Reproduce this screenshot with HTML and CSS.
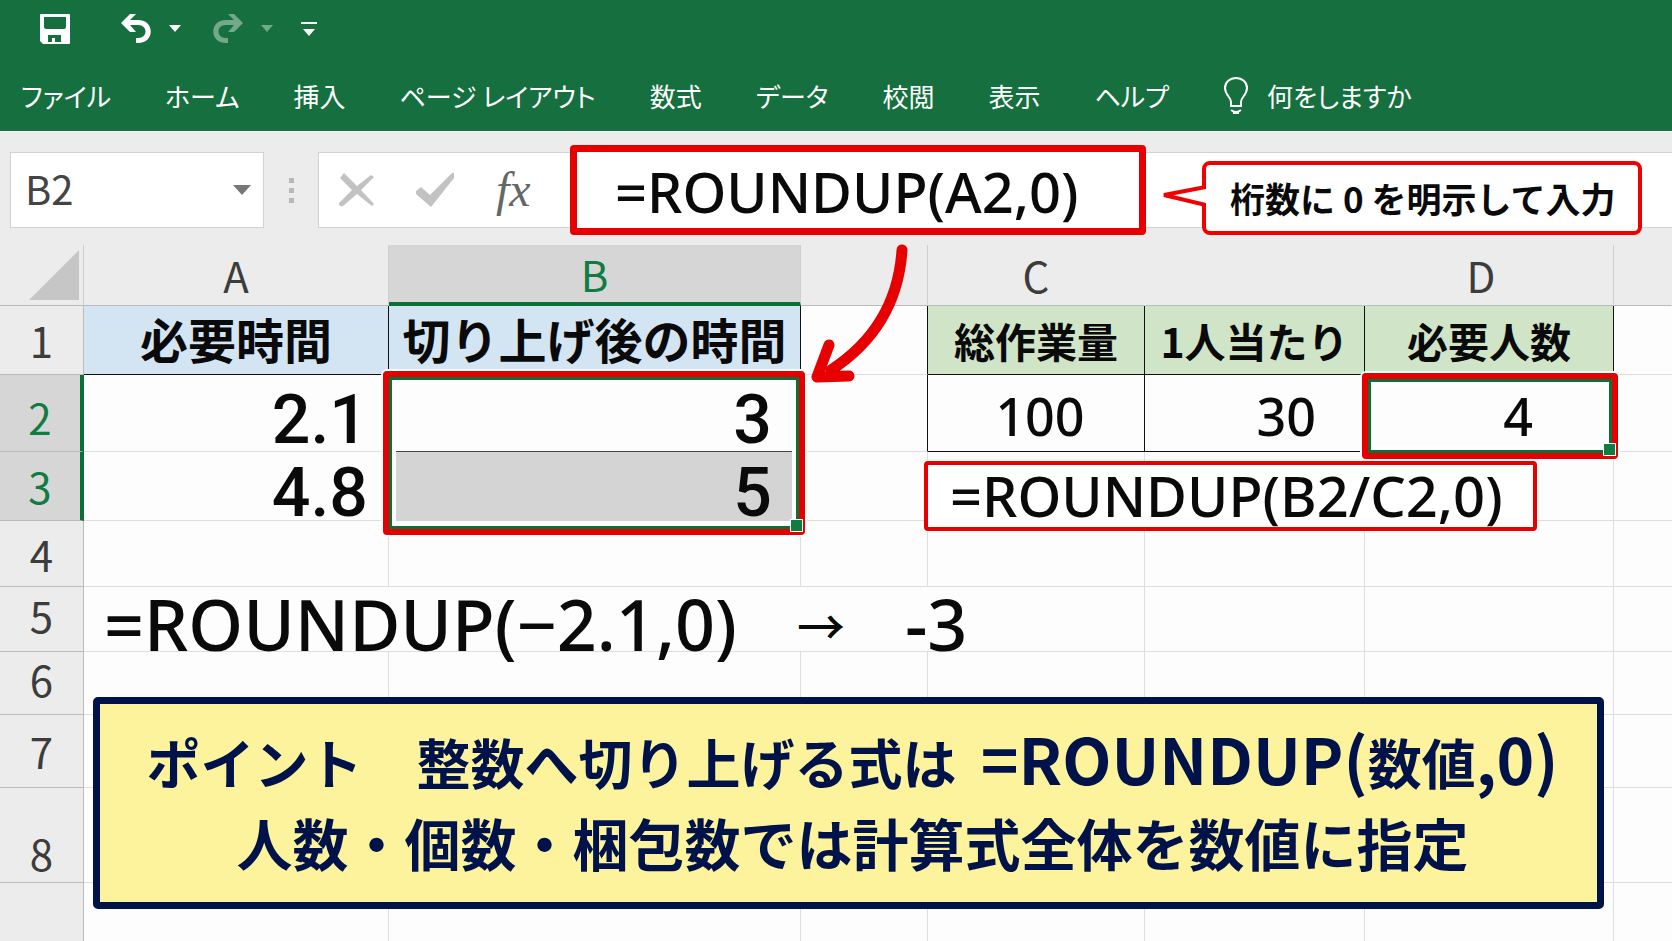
FILE: index.html
```html
<!DOCTYPE html>
<html lang="ja">

<head>
    <meta charset="utf-8">
    <title>ROUNDUP関数</title>
    <meta name="viewport" content="width=device-width, initial-scale=1">
    <link rel="stylesheet" href="styles.css">
</head>

<body>
    <header class="ribbon">
        <div class="quick-access">
            <button class="icon-button save" aria-label="上書き保存">
                <svg width="30" height="30" viewBox="0 0 30 30"><path fill="#fff" fill-rule="evenodd" d="M1 0H29Q30 0 30 1V29Q30 30 29 30H3L0 27V1Q0 0 1 0ZM4 3V13Q4 15 6 15H24Q26 15 26 13V3ZM8 21V28H12V24H15V28H21V21Z"/></svg>
            </button>
            <button class="icon-button undo" aria-label="元に戻す">
                <svg width="32" height="30" viewBox="0 0 32 30"><path fill="#fff" d="M1 9L10 0H16L10 6H18C35 6 35 29 18 29H16V24H18C28 24 28 11 18 11H10L16 18H10Z"/></svg>
            </button>
            <button class="icon-button undo-menu" aria-label="元に戻す一覧">
                <svg width="12" height="8" viewBox="0 0 12 8"><path fill="#fff" d="M0 0H12L6 7Z"/></svg>
            </button>
            <button class="icon-button redo" aria-label="やり直し">
                <svg width="32" height="30" viewBox="0 0 32 30"><path fill="#fff" d="M31 9L22 0H16L22 6H14C-3 6 -3 29 14 29H16V24H14C4 24 4 11 14 11H22L16 18H22Z"/></svg>
            </button>
            <button class="icon-button redo-menu" aria-label="やり直し一覧">
                <svg width="12" height="8" viewBox="0 0 12 8"><path fill="#fff" d="M0 0H12L6 7Z"/></svg>
            </button>
            <button class="icon-button" aria-label="クイックアクセスのカスタマイズ">
                <svg width="16" height="16" viewBox="0 0 16 16"><path fill="#fff" d="M0 1H16V3H0ZM2 8H14L8 15Z"/></svg>
            </button>
        </div>
        <nav class="tabs">
            <a href="#">ファイル</a>
            <a href="#">ホーム</a>
            <a href="#">挿入</a>
            <a href="#">ページ レイアウト</a>
            <a href="#">数式</a>
            <a href="#">データ</a>
            <a href="#">校閲</a>
            <a href="#">表示</a>
            <a href="#">ヘルプ</a>
            <a href="#" class="tell-me">
                <svg width="26" height="40" viewBox="0 0 26 40"><path fill="none" stroke="#fff" stroke-width="2" d="M8 30V26C8 21 2 19 2 12C2 6 7 2 13 2S24 6 24 12C24 19 18 21 18 26V30ZM8 34Q13 38 18 34M10 37H16"/></svg>
                何をしますか
            </a>
        </nav>
    </header>

    <div class="formula-bar">
        <div class="name-box">
            <input type="text" value="B2" aria-label="名前ボックス">
            <svg width="18" height="10" viewBox="0 0 18 10"><path fill="#777" d="M0 0H18L9 10Z"/></svg>
        </div>
        <div class="grip"><i></i><i></i><i></i></div>
        <div class="formula-field">
            <button class="icon-button cancel" aria-label="キャンセル">
                <svg width="36" height="34" viewBox="0 0 36 34"><path fill="#c2c2c2" d="M5 0L18 13L32 2L35 4L22 17L35 31L33 33L18 21L4 33Q0 34 0 30L13 17L1 5Z"/></svg>
            </button>
            <button class="icon-button enter" aria-label="入力">
                <svg width="38" height="34" viewBox="0 0 38 34"><path fill="#c2c2c2" d="M0 18L5 14L14 22L36 0H38V5L15 34L0 21Z"/></svg>
            </button>
            <button class="fx" aria-label="関数の挿入">fx</button>
            <input class="formula-input" type="text" value="=ROUNDUP(A2,0)" aria-label="数式バー">
            <div class="callout">
                <svg class="callout-tail" width="46" height="26" viewBox="0 0 46 26"><path fill="#fff" stroke="#f00000" stroke-width="4" d="M46 4L4 12L46 22"/></svg>
                桁数に 0 を明示して入力
            </div>
        </div>
    </div>

    <main class="sheet">
        <table>
            <colgroup>
                <col class="col-head">
                <col class="col-a">
                <col class="col-b">
                <col class="col-gap">
                <col class="col-c">
                <col class="col-per">
                <col class="col-d">
                <col>
            </colgroup>
            <thead>
                <tr>
                    <th class="corner"><svg width="50" height="50" viewBox="0 0 50 50"><path fill="#c6c6c6" d="M50 0V50H0Z"/></svg></th>
                    <th>A</th>
                    <th class="active">B</th>
                    <th></th>
                    <th class="open">C</th>
                    <th class="open"></th>
                    <th class="letter-d">D</th>
                    <th class="open"></th>
                </tr>
            </thead>
            <tbody>
                <tr class="row-1">
                    <th>1</th>
                    <td class="blue">必要時間</td>
                    <td class="blue">切り上げ後の時間</td>
                    <td class="before-table"></td>
                    <td class="green">総作業量</td>
                    <td class="green">1人当たり</td>
                    <td class="green">必要人数</td>
                    <td></td>
                </tr>
                <tr class="row-2">
                    <th class="active">2</th>
                    <td class="value">2.1</td>
                    <td class="value result">3<div class="selection selection-b"></div></td>
                    <td class="before-table"><svg class="arrow" width="100" height="142" viewBox="0 0 100 142"><path d="M91 7Q86 84 20 127M18 102L6 134L38 133"/></svg></td>
                    <td class="boxed total">100<div class="formula-note">=ROUNDUP(B2/C2,0)</div></td>
                    <td class="boxed per-person">30</td>
                    <td class="boxed people">4<div class="selection selection-d"></div></td>
                    <td></td>
                </tr>
                <tr class="row-3">
                    <th class="active">3</th>
                    <td class="value">4.8</td>
                    <td class="value result filled">5</td>
                    <td></td>
                    <td></td>
                    <td></td>
                    <td></td>
                    <td></td>
                </tr>
                <tr class="row-4">
                    <th>4</th>
                    <td></td>
                    <td></td>
                    <td></td>
                    <td></td>
                    <td></td>
                    <td></td>
                    <td></td>
                </tr>
                <tr class="row-5">
                    <th>5</th>
                    <td colspan="4">
                        <div class="example"><span>=ROUNDUP(−2.1,0)</span><span class="to">→</span><span>-3</span></div>
                    </td>
                    <td></td>
                    <td></td>
                    <td></td>
                </tr>
                <tr class="row-6">
                    <th>6</th>
                    <td></td>
                    <td></td>
                    <td></td>
                    <td></td>
                    <td></td>
                    <td></td>
                    <td></td>
                </tr>
                <tr class="row-7">
                    <th>7</th>
                    <td></td>
                    <td></td>
                    <td></td>
                    <td></td>
                    <td></td>
                    <td></td>
                    <td></td>
                </tr>
                <tr class="row-8">
                    <th>8</th>
                    <td></td>
                    <td></td>
                    <td></td>
                    <td></td>
                    <td></td>
                    <td></td>
                    <td></td>
                </tr>
                <tr class="row-9">
                    <th></th>
                    <td></td>
                    <td></td>
                    <td></td>
                    <td></td>
                    <td></td>
                    <td></td>
                    <td></td>
                </tr>
            </tbody>
        </table>
        <section class="point">
            <p>ポイント　整数へ切り上げる式は <span class="latin formula">=ROUNDUP(</span>数値<span class="latin">,0)</span></p>
            <p class="second">人数・個数・梱包数では計算式全体を数値に指定</p>
        </section>
    </main>
</body>

</html>
```
FILE: styles.css
```css
* {
    box-sizing: border-box;
}

body {
    margin: 0;
    min-height: 100vh;
    display: flex;
    flex-direction: column;
    overflow: hidden;
    background-color: #ececec;
    font-family: "Noto Sans CJK JP", sans-serif;
    color: #0a0a0a;
}

button {
    border: none;
    background: none;
    padding: 0;
    cursor: pointer;
}

svg {
    display: block;
}

/* Ribbon */

.ribbon {
    background-color: #166f3e;
    border-bottom: 1px solid #fff;
    height: 132px;
    padding-top: 12px;
}

.quick-access {
    display: flex;
    align-items: center;
    height: 34px;
    padding-left: 40px;
}

.save {
    margin-right: 50px;
}

.undo {
    margin-right: 17px;
}

.undo-menu {
    margin-right: 31px;
}

.redo {
    margin-right: 17px;
}

.redo-menu {
    margin-right: 28px;
}

.redo,
.redo-menu {
    opacity: 0.4;
}

.tabs {
    display: flex;
    align-items: center;
    gap: 54px;
    height: 72px;
    padding: 28px 21px 0;
    font-feature-settings: "palt";
}

.tabs a {
    color: #fff;
    font-size: 26px;
    line-height: 40px;
    text-decoration: none;
    white-space: nowrap;
}

.tabs .tell-me {
    display: flex;
    align-items: center;
    gap: 18px;
}

/* Formula bar */

.formula-bar {
    display: flex;
    align-items: stretch;
    height: 113px;
    padding: 20px 0 17px 10px;
}

.name-box {
    display: flex;
    align-items: center;
    width: 254px;
    padding: 0 12px 0 14px;
    background-color: #fff;
    border: 1px solid #d2d2d2;
}

.name-box input {
    flex: 1;
    min-width: 0;
    height: 58px;
    border: none;
    outline: none;
    padding: 0 0 4px;
    font-family: inherit;
    font-size: 40px;
    color: #444;
}

.grip {
    display: flex;
    flex-direction: column;
    justify-content: center;
    align-items: center;
    gap: 5px;
    width: 54px;
}

.grip i {
    width: 5px;
    height: 5px;
    background-color: #b8b8b8;
}

.formula-field {
    flex: 1;
    display: flex;
    align-items: center;
    background-color: #fff;
    border: 1px solid #d2d2d2;
    border-right: none;
    padding-left: 20px;
}

.cancel {
    margin-right: 41px;
}

.enter {
    margin-right: 42px;
}

.fx {
    width: 74px;
    flex-shrink: 0;
    text-align: left;
    font-family: "Liberation Serif", serif;
    font-style: italic;
    font-size: 48px;
    line-height: 50px;
    color: #666;
}

.formula-input {
    width: 576px;
    height: 90px;
    flex-shrink: 0;
    padding: 2px 0 0 38px;
    border: 7px solid #e60000;
    border-radius: 4px;
    outline: none;
    background-color: #fff;
    font-family: "Noto Sans", sans-serif;
    font-weight: 500;
    font-size: 56px;
    color: #0a0a0a;
}

.callout {
    position: relative;
    height: 74px;
    margin: 16px 0 0 56px;
    padding: 0 22px 0 24px;
    background-color: #fff;
    border: 4px solid #f00000;
    border-radius: 8px;
    font-size: 35px;
    font-weight: 700;
    line-height: 66px;
    white-space: nowrap;
}

.callout-tail {
    position: absolute;
    top: 18px;
    left: -46px;
}

/* Sheet */

.sheet {
    position: relative;
    flex: 1;
    background-color: #fdfdfd;
}

table {
    width: 100%;
    table-layout: fixed;
    border-collapse: separate;
    border-spacing: 0;
}

.col-head {
    width: 84px;
}

.col-a {
    width: 305px;
}

.col-b {
    width: 412px;
}

.col-gap {
    width: 127px;
}

.col-c {
    width: 217px;
}

.col-per {
    width: 220px;
}

.col-d {
    width: 249px;
}

th {
    padding: 0;
    background-color: #ececec;
    border-right: 1px solid #bbb;
    border-bottom: 1px solid #bbb;
    font-size: 42px;
    font-weight: 400;
    line-height: 50px;
    color: #3c3c3c;
}

td {
    position: relative;
    padding: 0;
    border-right: 1px solid #dedede;
    border-bottom: 1px solid #dedede;
    white-space: nowrap;
}

td:last-child {
    border-right: none;
}

thead th {
    height: 61px;
    border-right-color: #cfcfcf;
}

thead .open {
    border-right-color: #ececec;
}

.corner svg {
    margin: 0 4px 0 auto;
}

.letter-d {
    padding-right: 16px;
}

th.active {
    background-color: #d6d6d6;
    color: #107c41;
}

thead th.active {
    border-bottom: 4px solid #0b6f38;
}

tbody th.active {
    border-right: 4px solid #0b6f38;
}

.row-1 {
    height: 69px;
}

.row-2 {
    height: 77px;
}

.row-2 th {
    padding-top: 8px;
}

.row-3 {
    height: 69px;
}

.row-4 {
    height: 66px;
}

.row-5 {
    height: 65px;
}

.row-6 {
    height: 63px;
}

.row-5 th,
.row-6 th {
    padding-bottom: 8px;
}

.row-7 {
    height: 73px;
}

.row-8 {
    height: 95px;
}

.row-8 th {
    padding-top: 36px;
}

.row-9 {
    height: 59px;
}

.blue,
.green {
    border-color: #111;
    text-align: center;
    font-weight: 700;
}

.blue {
    padding-bottom: 4px;
    background-color: #d3e4f3;
    font-size: 48px;
    line-height: 60px;
}

.green {
    background-color: #d0e5c8;
    font-size: 41px;
    line-height: 60px;
}

.before-table {
    border-right-color: #111;
}

.value {
    padding: 14px 20px 0 0;
    text-align: right;
    font-family: Roboto, sans-serif;
    font-size: 68px;
    font-weight: 500;
    line-height: 54px;
}

.result {
    padding-right: 28px;
    border-bottom-color: #444;
}

.filled {
    background-color: #d4d4d4;
    border-bottom-color: #d4d4d4;
}

.boxed {
    padding-top: 6px;
    border-color: #111;
    font-family: "Noto Sans", sans-serif;
    font-size: 52px;
    font-weight: 500;
    line-height: 60px;
}

.total {
    padding-left: 8px;
    text-align: center;
}

.per-person {
    padding-right: 48px;
    text-align: right;
}

.people {
    padding-right: 80px;
    text-align: right;
}

/* Marks drawn over the cells */

.selection {
    position: absolute;
    z-index: 1;
    border: 6px solid #e60000;
    border-radius: 4px;
    box-shadow: 0 0 0 2px #fff, inset 0 0 0 3px #0b6f38, inset 0 0 0 7px #fff;
}

.selection::after {
    content: "";
    position: absolute;
    right: -4px;
    bottom: -3px;
    width: 11px;
    height: 11px;
    background-color: #107c41;
    border: 1px solid #fff;
}

.selection-b {
    top: -4px;
    left: -6px;
    right: -5px;
    height: 164px;
}

.selection-d {
    top: -2px;
    left: -3px;
    right: -5px;
    bottom: -8px;
}

.arrow {
    position: absolute;
    top: -132px;
    left: 10px;
    z-index: 2;
}

.arrow path {
    fill: none;
    stroke: #e60000;
    stroke-width: 11;
    stroke-linecap: round;
    stroke-linejoin: round;
}

.formula-note {
    position: absolute;
    top: 86px;
    left: -4px;
    z-index: 1;
    height: 70px;
    padding: 0 30px 0 22px;
    background-color: #fff;
    border: 4px solid #e60000;
    border-radius: 4px;
    font-size: 56px;
    line-height: 60px;
}

.example {
    display: flex;
    align-items: center;
    gap: 60px;
    height: 64px;
    padding: 10px 0 0 20px;
    font-family: "Noto Sans", "Noto Sans CJK JP", sans-serif;
    font-size: 70px;
    font-weight: 500;
    line-height: 54px;
}

.example .to {
    font-family: "Noto Sans CJK JP", sans-serif;
    font-size: 48px;
}

.point {
    position: absolute;
    top: 452px;
    left: 93px;
    right: 68px;
    padding: 18px 0 20px 8px;
    background-color: #fdf39c;
    border: 7px solid #00124a;
    border-radius: 5px;
    color: #00124a;
    font-weight: 700;
    text-align: center;
    white-space: nowrap;
}

.point p {
    margin: 0;
    font-size: 54px;
    line-height: 80px;
}

.point .second {
    font-size: 56px;
}

.point .latin {
    font-size: 64px;
    line-height: 1;
}

.point .formula {
    margin-left: 12px;
}
```
